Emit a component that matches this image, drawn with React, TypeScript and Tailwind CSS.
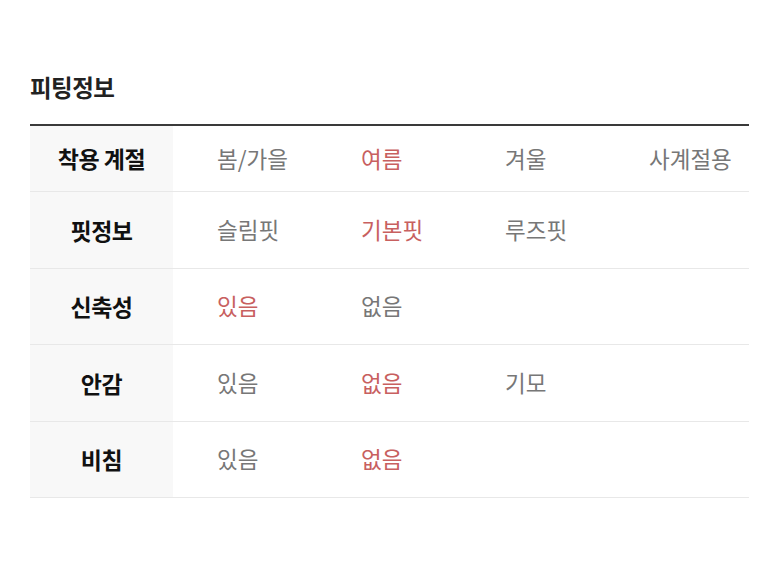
const rows: { label: string; values: string[]; active: number[]; first?: boolean }[] = [
  { label: "착용 계절", values: ["봄/가을", "여름", "겨울", "사계절용"], active: [1], first: true },
  { label: "핏정보", values: ["슬림핏", "기본핏", "루즈핏"], active: [1] },
  { label: "신축성", values: ["있음", "없음"], active: [0] },
  { label: "안감", values: ["있음", "없음", "기모"], active: [1] },
  { label: "비침", values: ["있음", "없음"], active: [1] },
];

export default function App() {
  return (
    <div
      className="w-[780px] h-[574px] bg-white pt-[70px] pl-[30px]"
      style={{ fontFamily: '"Noto Sans CJK KR", "Noto Sans", sans-serif' }}
    >
      <h2 className="text-[23.5px] font-bold text-[#222] leading-[34px] tracking-[-0.5px]">피팅정보</h2>
      <div className="w-[719px] mt-[20px] border-t-2 border-[#3a3a3a]">
        {rows.map((row) => (
          <div
            key={row.label}
            className={`flex border-b border-[#e8e8e8] ${row.first ? "h-[66px]" : "h-[76.5px]"}`}
          >
            <div className="w-[143px] shrink-0 bg-[#f8f8f8] flex items-center justify-center text-[23px] font-bold text-[#111] tracking-[-0.5px]">
              {row.label}
            </div>
            <div className="flex flex-1 items-center">
              {row.values.map((v, i) => (
                <div
                  key={v}
                  className={`w-[144px] pl-[44px] text-[22.5px] ${
                    row.active.includes(i) ? "text-[#c8605f]" : "text-[#777]"
                  }`}
                >
                  {v}
                </div>
              ))}
            </div>
          </div>
        ))}
      </div>
    </div>
  );
}
